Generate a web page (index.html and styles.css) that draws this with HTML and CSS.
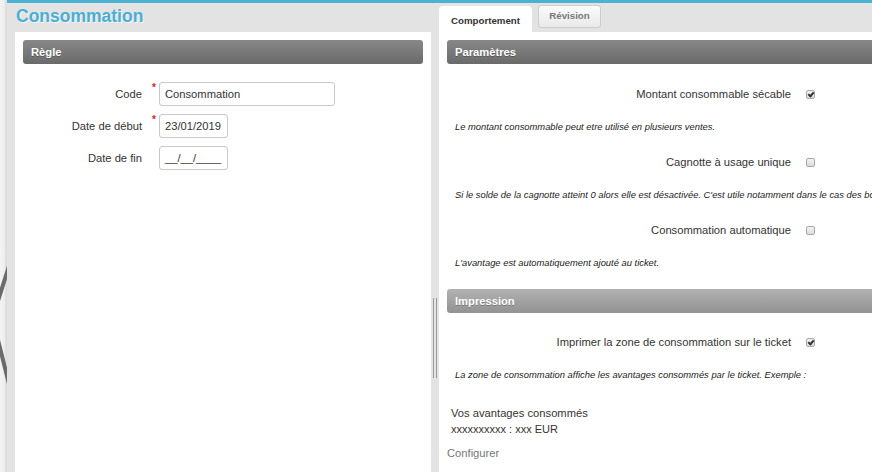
FILE: index.html
```html
<!DOCTYPE html>
<html lang="fr">
<head>
<meta charset="utf-8">
<title>Consommation</title>
<link rel="stylesheet" href="styles.css">
</head>
<body>
<div class="edge">
  <svg class="edge-art" width="7" height="472" viewBox="0 0 7 472"><path d="M9 266 L-3 304 M-3 336 L9 384" stroke="#6b6b6b" stroke-width="4" fill="none"/></svg>
</div>
<div class="app">
  <div class="left">
    <div class="title">Consommation</div>
    <div class="card">
      <div class="header">Règle</div>
      <div class="form">
        <div class="frow">
          <label class="flabel">Code</label>
          <span class="req">*</span>
          <div class="input wide">Consommation</div>
        </div>
        <div class="frow">
          <label class="flabel">Date de début</label>
          <span class="req">*</span>
          <div class="input date">23/01/2019</div>
        </div>
        <div class="frow">
          <label class="flabel">Date de fin</label>
          <span class="req"></span>
          <div class="input date">__/__/____</div>
        </div>
      </div>
    </div>
  </div>
  <div class="gutter"><div class="grip"></div></div>
  <div class="right">
    <div class="tabs">
      <div class="tab active">Comportement</div>
      <div class="tab">Révision</div>
    </div>
    <div class="card rcard">
      <div class="header">Paramètres</div>
      <div class="section first">
        <div class="crow"><span class="clabel">Montant consommable sécable</span><span class="cb checked"></span></div>
        <div class="desc">Le montant consommable peut etre utilisé en plusieurs ventes.</div>
        <div class="crow"><span class="clabel">Cagnotte à usage unique</span><span class="cb"></span></div>
        <div class="desc">Si le solde de la cagnotte atteint 0 alors elle est désactivée. C'est utile notamment dans le cas des bons d'achat.</div>
        <div class="crow"><span class="clabel">Consommation automatique</span><span class="cb"></span></div>
        <div class="desc">L'avantage est automatiquement ajouté au ticket.</div>
      </div>
      <div class="header light">Impression</div>
      <div class="section">
        <div class="crow"><span class="clabel">Imprimer la zone de consommation sur le ticket</span><span class="cb checked"></span></div>
        <div class="desc">La zone de consommation affiche les avantages consommés par le ticket. Exemple :</div>
        <div class="sample">
          <div>Vos avantages consommés</div>
          <div class="xs">xxxxxxxxxx : xxx EUR</div>
        </div>
        <div class="link">Configurer</div>
      </div>
    </div>
  </div>
</div>
</body>
</html>
```

FILE: styles.css
```css
* { box-sizing: border-box; }
html, body { margin: 0; padding: 0; }
body {
  width: 872px;
  height: 472px;
  overflow: hidden;
  display: flex;
  font-family: "Liberation Sans", Arial, sans-serif;
  color: #333;
  background: #e3e3e3;
}
.edge {
  width: 7px;
  flex: none;
  background: linear-gradient(to right, #f4f4f4 0, #ececec 5px, #d6d6d6 6px, #e3e3e3 7px);
}
.edge-art { display: block; overflow: hidden; }
.app {
  flex: 1;
  min-width: 0;
  display: flex;
  border-top: 3px solid #4cb2d1;
  background: #e3e3e3;
}
.left {
  width: 424px;
  flex: none;
  display: flex;
  flex-direction: column;
}
.title {
  height: 29px;
  padding-left: 9px;
  font-size: 17.5px;
  font-weight: bold;
  line-height: 26px;
  color: #4aaed4;
  text-shadow: 1px 1px 0 rgba(255,255,255,0.7);
}
.card {
  flex: 1;
  background: #fff;
  padding: 8px;
}
.left .card { margin-left: 8px; }
.header {
  height: 24px;
  border-radius: 3px;
  background: linear-gradient(#888 0%, #6a6a6a 100%);
  color: #fff;
  font-size: 11.2px;
  font-weight: bold;
  line-height: 24px;
  padding-left: 8px;
  text-shadow: 0 1px 0 rgba(0,0,0,0.25);
}
.header.light {
  background: linear-gradient(#b2b2b2 0%, #929292 100%);
  margin-top: 16px;
}
.form {
  padding-top: 18px;
  display: flex;
  flex-direction: column;
  gap: 8px;
}
.frow {
  display: flex;
  height: 24px;
  align-items: center;
}
.flabel {
  width: 119px;
  text-align: right;
  font-size: 11.2px;
  color: #333;
}
.req {
  width: 17px;
  height: 24px;
  align-self: flex-start;
  text-align: right;
  padding-right: 3px;
  color: #e02020;
  font-size: 10px;
  font-weight: bold;
  line-height: 10px;
  padding-top: 1px;
}
.input {
  height: 24px;
  border: 1px solid #c8c8c8;
  border-radius: 3px;
  font-size: 11.2px;
  line-height: 22px;
  padding-left: 5px;
  color: #333;
  white-space: nowrap;
  overflow: hidden;
}
.input.wide { width: 176px; }
.input.date { width: 69px; }
.gutter {
  width: 8px;
  flex: none;
  display: flex;
  flex-direction: column;
  align-items: center;
}
.grip {
  margin-top: 295px;
  width: 4px;
  height: 80px;
  border-left: 1px solid #9a9a9a;
  border-right: 1px solid #9a9a9a;
}
.right {
  flex: 1;
  min-width: 0;
  overflow: hidden;
  display: flex;
  flex-direction: column;
}
.tabs {
  height: 29px;
  display: flex;
  align-items: flex-start;
  gap: 6px;
  padding-top: 2px;
}
.tab {
  font-size: 9.7px;
  font-weight: bold;
  white-space: nowrap;
}
.tab.active {
  width: 93px;
  height: 27px;
  margin-top: 1px;
  background: #fff;
  border-radius: 4px 4px 0 0;
  text-align: center;
  line-height: 26px;
  padding-top: 2px;
  color: #333;
}
.tab:not(.active) {
  width: 63px;
  height: 23px;
  border: 1px solid #cdcdcd;
  border-radius: 3px;
  background: linear-gradient(#fbfbfb, #e9e9e9);
  text-align: center;
  line-height: 19px;
  color: #777;
}
.rcard {
  width: 640px;
}
.section {
  padding-top: 17px;
}
.section.first { padding-top: 18px; }
.crow {
  height: 24px;
  display: flex;
  align-items: center;
  white-space: nowrap;
}
.clabel {
  width: 344px;
  text-align: right;
  font-size: 11.2px;
  color: #333;
}
.cb {
  margin-left: 15px;
  width: 9px;
  height: 9px;
  border: 1px solid #a9a9a9;
  border-radius: 2px;
  background: linear-gradient(#f2f2f2, #dcdcdc);
  position: relative;
}
.cb.checked::after {
  content: "";
  position: absolute;
  left: 2px;
  top: 0px;
  width: 2px;
  height: 4px;
  border-right: 2px solid #333;
  border-bottom: 2px solid #333;
  transform: rotate(40deg);
}
.desc {
  height: 20px;
  margin-top: 11px;
  margin-bottom: 13px;
  line-height: 20px;
  padding-left: 8px;
  font-size: 9.4px;
  font-style: italic;
  color: #222;
  white-space: nowrap;
}
.sample {
  margin-top: 20px;
  padding-left: 4px;
  font-size: 11.2px;
  line-height: 16px;
  color: #333;
}
.sample .xs { font-size: 11px; }
.link {
  margin-top: 8px;
  font-size: 11.2px;
  line-height: 16px;
  color: #777;
}
```
